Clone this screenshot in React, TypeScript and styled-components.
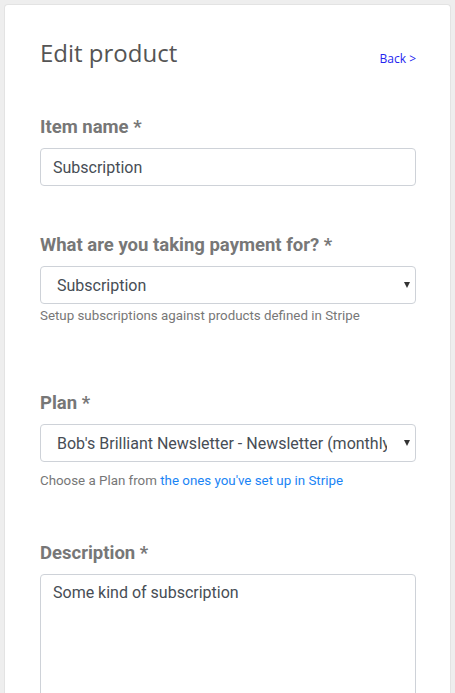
import styled, { createGlobalStyle } from 'styled-components';

const GlobalStyle = createGlobalStyle`
  html, body {
    margin: 0;
    padding: 0;
    background: #eeeeee;
  }
  body {
    font-family: Roboto, "Noto Sans", sans-serif;
  }
  * {
    box-sizing: border-box;
  }
`;

const Card = styled.div`
  margin: 4px 4px 0 4px;
  min-height: 689px;
  background: #ffffff;
  border: 1px solid #e3e3e3;
  border-bottom: none;
  border-radius: 4px 4px 0 0;
  padding: 32px 34px 0 35px;
`;

const Header = styled.div`
  display: flex;
  justify-content: space-between;
  align-items: baseline;
  margin-bottom: 48px;
`;

const Title = styled.h1`
  margin: 0;
  font-family: "Open Sans", sans-serif;
  font-weight: 400;
  font-size: 24px;
  line-height: 32px;
  color: #555555;
`;

const BackLink = styled.a`
  font-family: "Open Sans", sans-serif;
  font-size: 12px;
  color: #2424f0;
  text-decoration: none;
  position: relative;
  top: 1px;
`;

const Group = styled.div<{ $gap: number }>`
  margin-bottom: ${p => p.$gap}px;
`;

const Label = styled.label`
  display: block;
  font-weight: 700;
  font-size: 18.5px;
  line-height: 20px;
  color: #777777;
  margin-bottom: 11px;
`;

const fieldBase = `
  display: block;
  width: 100%;
  border: 1px solid #ced2d8;
  border-radius: 4px;
  background: #ffffff;
  font-family: Roboto, "Noto Sans", sans-serif;
  font-size: 16px;
  color: #474d55;
  outline: none;
`;

const TextInput = styled.input`
  ${fieldBase}
  height: 38px;
  padding: 0 12px;
`;

const SelectWrap = styled.div`
  position: relative;
`;

const Select = styled.select`
  ${fieldBase}
  appearance: none;
  -webkit-appearance: none;
  height: 38px;
  padding: 0 28px 0 16px;
  white-space: nowrap;
  overflow: hidden;
`;

const Caret = styled.span`
  position: absolute;
  right: 6px;
  top: 16px;
  width: 0;
  height: 0;
  border-left: 3px solid transparent;
  border-right: 3px solid transparent;
  border-top: 6px solid #333333;
  pointer-events: none;
`;

const Help = styled.p<{ $top: number }>`
  margin: ${p => p.$top}px 0 0;
  font-size: 13.33px;
  line-height: 18px;
  color: #777777;
`;

const HelpLink = styled.a`
  color: #1a84f5;
  text-decoration: none;
`;

const TextArea = styled.textarea`
  ${fieldBase}
  height: 160px;
  padding: 8px 12px;
  line-height: 20px;
  resize: none;
`;

export default function App() {
  return (
    <>
      <GlobalStyle />
      <Card>
        <Header>
          <Title>Edit product</Title>
          <BackLink href="#">Back &gt;</BackLink>
        </Header>

        <Group $gap={49}>
          <Label>Item name *</Label>
          <TextInput defaultValue="Subscription" />
        </Group>

        <Group $gap={68}>
          <Label>What are you taking payment for? *</Label>
          <SelectWrap>
            <Select defaultValue="subscription">
              <option value="subscription">Subscription</option>
              <option value="one-off">One-off payment</option>
            </Select>
            <Caret />
          </SelectWrap>
          <Help $top={3}>Setup subscriptions against products defined in Stripe</Help>
        </Group>

        <Group $gap={53}>
          <Label>Plan *</Label>
          <SelectWrap>
            <Select defaultValue="bob">
              <option value="bob">Bob's Brilliant Newsletter - Newsletter (monthly)</option>
            </Select>
            <Caret />
          </SelectWrap>
          <Help $top={10}>
            Choose a Plan from <HelpLink href="#">the ones you've set up in Stripe</HelpLink>
          </Help>
        </Group>

        <Group $gap={0}>
          <Label>Description *</Label>
          <TextArea defaultValue="Some kind of subscription" />
        </Group>
      </Card>
    </>
  );
}
